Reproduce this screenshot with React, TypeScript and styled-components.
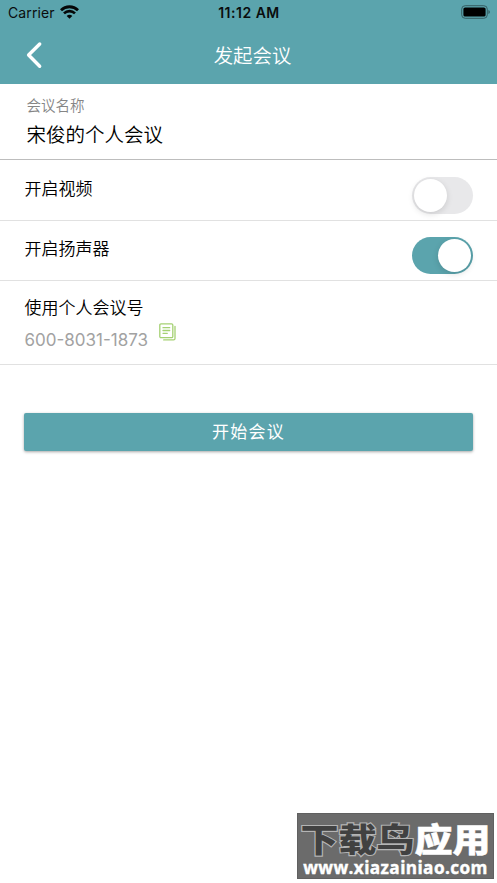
import React from 'react';
import styled, { createGlobalStyle } from 'styled-components';

const teal = '#5ba4ad';

const GlobalStyle = createGlobalStyle`
  * { box-sizing: border-box; }
  body {
    margin: 0;
    background: #fff;
    color: #111;
    font-family: Inter, "Noto Sans CJK SC", sans-serif;
    overflow: hidden;
  }
`;

const Screen = styled.main`
  position: relative;
  display: flex;
  flex-direction: column;
  width: 497px;
  height: 883px;
  background: #fff;
`;

const Header = styled.header`
  flex: none;
  height: 84px;
  background: ${teal};
`;

const StatusBar = styled.div`
  display: grid;
  grid-template-columns: 1fr auto 1fr;
  align-items: center;
  height: 26px;
  padding: 0 7px 0 8px;
  color: #0a0d0e;
`;

const Carrier = styled.div`
  display: flex;
  align-items: center;
  gap: 5px;
  font-size: 14px;
  line-height: 20px;
  letter-spacing: 0.1px;
  svg { display: block; margin-top: -2px; }
`;

const Clock = styled.div`
  font-size: 14px;
  line-height: 20px;
  font-weight: 600;
  letter-spacing: 0.5px;
`;

const Battery = styled.svg`
  display: block;
  justify-self: end;
  margin-top: -2px;
`;

const NavBar = styled.div`
  display: grid;
  grid-template-columns: 60px 1fr 52px;
  align-items: center;
  height: 58px;
`;

const BackButton = styled.button`
  display: flex;
  height: 58px;
  padding: 0 0 1px 25px;
  align-items: center;
  border: 0;
  background: none;
`;

const Title = styled.h1`
  margin: 0;
  padding-top: 1px;
  color: #fff;
  text-align: center;
  font-size: 19.4px;
  line-height: 28px;
  font-weight: 350;
`;

const NameField = styled.label`
  flex: none;
  height: 76px;
  padding: 12px 26.5px 0;
  border-bottom: 1px solid #bdbdbd;
`;

const FieldLabel = styled.span`
  display: block;
  color: #858585;
  font-size: 14.5px;
  line-height: 20px;
  font-weight: 350;
`;

const FieldValue = styled.span`
  display: block;
  margin-top: 4px;
  font-size: 19.5px;
  line-height: 30px;
  font-weight: 350;
  color: #000;
`;

const Row = styled.section<{ $height: number }>`
  display: flex;
  flex: none;
  align-items: flex-end;
  justify-content: space-between;
  height: ${({ $height }) => $height}px;
  padding: 0 24px 6px 24.5px;
  border-bottom: 1px solid #e1e1e1;
`;

const RowLabel = styled.div`
  font-size: 17px;
  line-height: 24px;
  font-weight: 350;
  color: #000;
`;

const SwitchLabel = styled(RowLabel)`
  margin-bottom: 13px;
`;

const Toggle = styled.button<{ $on?: boolean }>`
  display: flex;
  justify-content: ${({ $on }) => ($on ? 'flex-end' : 'flex-start')};
  align-items: center;
  width: 61.5px;
  height: 37.5px;
  margin: 0;
  padding: 0 2.5px 0 2px;
  border: 0;
  border-radius: 19px;
  background: ${({ $on }) => ($on ? teal : '#e8e8ea')};
`;

const Knob = styled.span`
  width: 33px;
  height: 33px;
  border-radius: 50%;
  background: #fff;
  box-shadow: 0 2px 6px rgba(0, 0, 0, 0.13);
`;

const NumberBlock = styled.div`
  padding-bottom: 6px;
`;

const NumberLine = styled.div`
  display: flex;
  align-items: flex-start;
  gap: 11px;
  margin-top: 2px;
  svg { display: block; margin-top: 1px; }
`;

const MeetingNumber = styled.span`
  color: #a2a2a2;
  font-size: 17px;
  line-height: 24px;
  margin-top: 6px;
`;

const StartButton = styled.button`
  flex: none;
  height: 38px;
  margin: 48px 24px 0;
  padding: 1px 0 0;
  border: 0;
  border-radius: 2px;
  background: ${teal};
  box-shadow: 0 1px 3px rgba(0, 0, 0, 0.35);
  color: #fff;
  font: 400 17px/37px Inter, "Noto Sans CJK SC", sans-serif;
  letter-spacing: 1.3px;
`;

const Watermark = styled.aside`
  position: absolute;
  right: 3px;
  bottom: 4px;
  display: flex;
  flex-direction: column;
  width: 197px;
  height: 66px;
  padding-top: 8px;
  background: #6b6b6b;
  border: 1px solid #606060;
  white-space: nowrap;
`;

const Brand = styled.div`
  display: flex;
  justify-content: center;
  height: 34px;
  font: 900 38px/32px "Noto Sans CJK SC", sans-serif;
  transform: scaleY(0.86);
`;

const BrandDark = styled.span`
  color: #414141;
  -webkit-text-stroke: 2.5px #b4b4b4;
  paint-order: stroke fill;
`;

const BrandLight = styled.span`
  color: #fff;
  -webkit-text-stroke: 0.6px #fff;
`;

const SiteAddress = styled.div`
  margin-top: 3px;
  color: #fff;
  text-align: center;
  font: 700 17.2px/18px "Open Sans", sans-serif;
  letter-spacing: 0.4px;
  -webkit-text-stroke: 0.4px #fff;
`;

function WifiIcon() {
  return (
    <svg width="19" height="14" viewBox="0 0 19 14" fill="none" stroke="#050708">
      <path d="M1 5.2C5.7.6 13.3.6 18 5.2" strokeWidth="2.8" />
      <path d="M4 8.4c3-3 8-3 11 0" strokeWidth="2.6" />
      <path d="M6.7 10.9c1.5-1.5 4.1-1.5 5.6 0L9.5 13.8Z" fill="#050708" stroke="none" />
    </svg>
  );
}

function CopyIcon() {
  return (
    <svg width="17" height="18" viewBox="0 0 17 18" fill="none" stroke="#a5d173" strokeWidth="1.3" strokeLinecap="round">
      <rect x=".8" y=".8" width="13" height="13.8" rx="1.2" />
      <path d="M4 4.7h6.7M4 7.5h6.7M4 10.3h4.3" />
      <path d="M16 3.3v12.2c0 .9-.5 1.4-1.4 1.4H4.7" />
    </svg>
  );
}

export default function App() {
  return (
    <>
      <GlobalStyle />
      <Screen>
        <Header>
          <StatusBar>
            <Carrier>Carrier <WifiIcon /></Carrier>
            <Clock>11:12 AM</Clock>
            <Battery width="29" height="14" viewBox="0 0 29 14">
              <rect x=".7" y=".7" width="25.6" height="12.6" rx="3.5" fill="none" stroke="#355e63" />
              <rect x="2.4" y="2.4" width="22.2" height="9.2" rx="1.7" fill="#000" />
              <path d="M27.4 4.9q1.5.6 1.5 2.1t-1.5 2.1Z" fill="#355e63" />
            </Battery>
          </StatusBar>
          <NavBar>
            <BackButton aria-label="返回">
              <svg width="18" height="28" viewBox="0 0 18 28" fill="none" stroke="#fff" strokeWidth="3.4" strokeLinecap="round" strokeLinejoin="round">
                <path d="M14.7 3 3.6 14l11.1 11.3" />
              </svg>
            </BackButton>
            <Title>发起会议</Title>
          </NavBar>
        </Header>
        <NameField>
          <FieldLabel>会议名称</FieldLabel>
          <FieldValue>宋俊的个人会议</FieldValue>
        </NameField>
        <Row $height={61}>
          <SwitchLabel>开启视频</SwitchLabel>
          <Toggle role="switch" aria-checked={false}><Knob /></Toggle>
        </Row>
        <Row $height={60}>
          <SwitchLabel>开启扬声器</SwitchLabel>
          <Toggle $on role="switch" aria-checked><Knob /></Toggle>
        </Row>
        <Row $height={84}>
          <NumberBlock>
            <RowLabel>使用个人会议号</RowLabel>
            <NumberLine>
              <MeetingNumber>600-8031-1873</MeetingNumber>
              <CopyIcon />
            </NumberLine>
          </NumberBlock>
        </Row>
        <StartButton>开始会议</StartButton>
        <Watermark>
          <Brand><BrandDark>下载鸟</BrandDark><BrandLight>应用</BrandLight></Brand>
          <SiteAddress>www.xiazainiao.com</SiteAddress>
        </Watermark>
      </Screen>
    </>
  );
}
